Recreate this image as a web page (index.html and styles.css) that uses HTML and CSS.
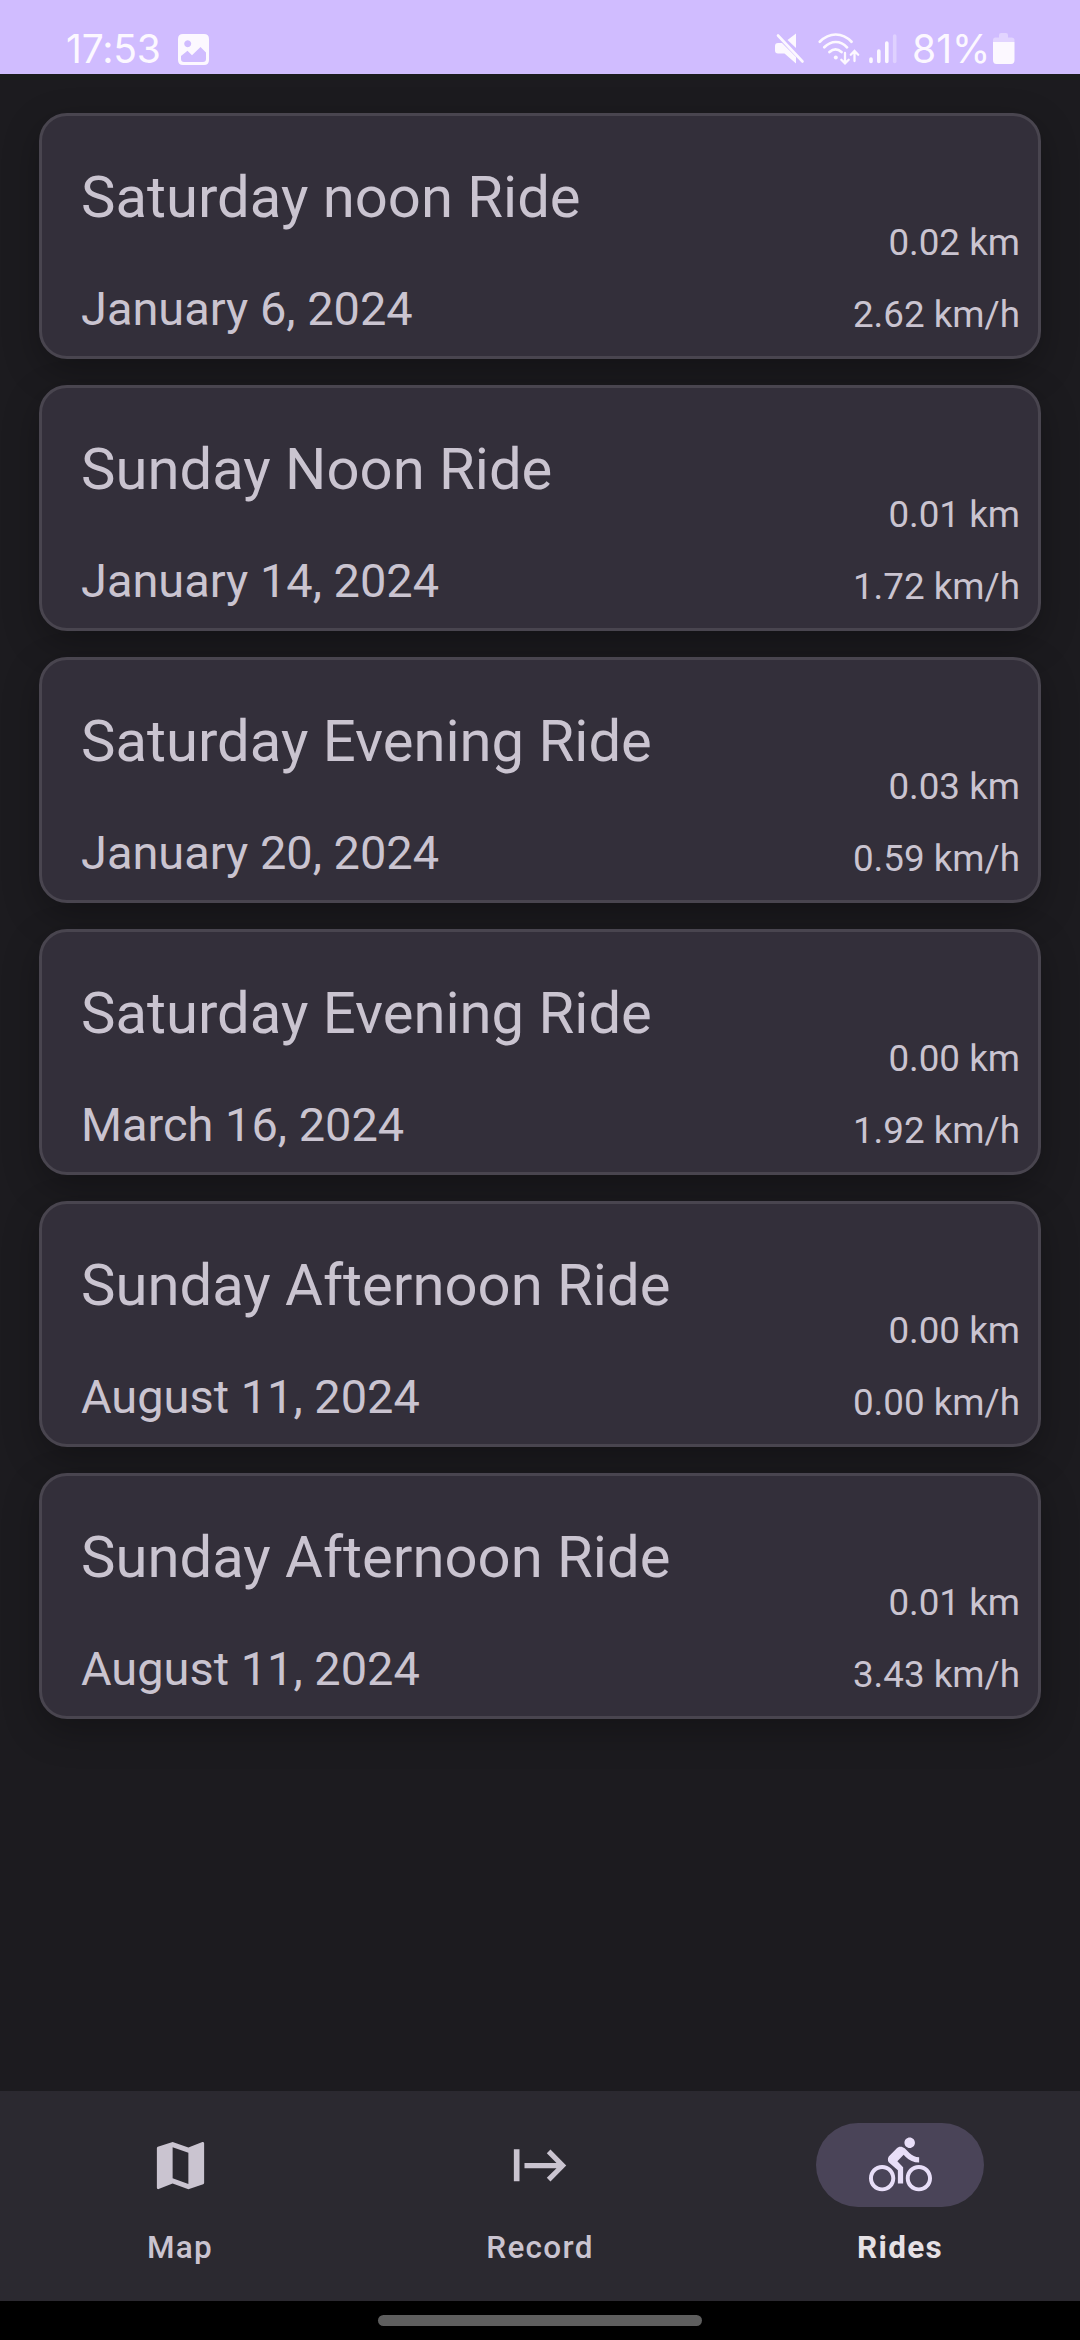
FILE: index.html
```html
<!DOCTYPE html>
<html lang="en">
<head>
<meta charset="utf-8">
<title>Rides</title>
<link rel="stylesheet" href="styles.css">
</head>
<body>
<div class="screen">
  <header class="status">
    <div class="status-group">
      <span class="clock">17:53</span>
      <svg class="ic-photo" width="31" height="31" viewBox="0 0 31 31"><path fill="currentColor" fill-rule="evenodd" d="M5 0H26Q31 0 31 5V26Q31 31 26 31H5Q0 31 0 26V5Q0 0 5 0ZM9.700 6.300a3.500 3.500 0 1 0 .01 0ZM3 22V25Q3 28 6 28H25Q28 28 28 25V18.500L22.500 13L14 21.200L9.500 16.800Z"/></svg>
    </div>
    <div class="status-group">
      <svg class="ic-mute" width="30" height="31" viewBox="0 0 30 31"><path fill="currentColor" d="M3 10H7L21 24V30.500L9.500 20.500H3Q0 20.500 0 17.500V13Q0 10 3 10ZM21 .5V15L12.500 7Z"/><path d="M3 2.500L27.500 28.500" stroke="currentColor" stroke-width="2.600" stroke-linecap="round"/></svg>
      <svg class="ic-wifi" width="42" height="32" viewBox="0 0 42 32" fill="none" stroke="currentColor" stroke-width="2.700" stroke-linecap="round"><path d="M1.800 8.800Q9 1.500 17.800 1.500T33.500 8.800M6.300 14.300Q11.500 9 17.800 9T29 14.300M11.500 19Q17.500 13.800 23.500 19"/><circle cx="17.800" cy="24.500" r="2" fill="currentColor" stroke="none"/><path stroke-width="2.300" d="M27 20V30M23.300 26.700L27 30.300L30.700 26.700M36.500 28V18.500M32.800 21.700L36.500 18L40.200 21.700"/></svg>
      <svg class="ic-signal" width="28" height="31" viewBox="0 0 28 31" stroke="currentColor" stroke-width="3.600" stroke-linecap="round"><path d="M2 26V28.500M9.800 18V28.500M17.800 10V28.500"/><path opacity=".35" d="M25.700 3V28.500"/></svg>
      <span class="percent">81%</span>
      <svg class="ic-battery" width="22" height="31" viewBox="0 0 22 31"><path opacity=".4" fill="currentColor" d="M0 9V7Q0 4.500 2.500 4.500H6V2Q6 0 8 0H13Q15 0 15 2V4.500H18.500Q21.500 4.500 21.500 7V9Z"/><path fill="currentColor" d="M0 9H21.500V27Q21.500 31 18 31H3.500Q0 31 0 27Z"/></svg>
    </div>
  </header>
  <main class="rides">
    <article class="card"><div class="info"><h2>Saturday noon Ride</h2><p>January 6, 2024</p></div><div class="stats"><span>0.02 km</span><span>2.62 km/h</span></div></article>
    <article class="card"><div class="info"><h2>Sunday Noon Ride</h2><p>January 14, 2024</p></div><div class="stats"><span>0.01 km</span><span>1.72 km/h</span></div></article>
    <article class="card"><div class="info"><h2>Saturday Evening Ride</h2><p>January 20, 2024</p></div><div class="stats"><span>0.03 km</span><span>0.59 km/h</span></div></article>
    <article class="card"><div class="info"><h2>Saturday Evening Ride</h2><p>March 16, 2024</p></div><div class="stats"><span>0.00 km</span><span>1.92 km/h</span></div></article>
    <article class="card"><div class="info"><h2>Sunday Afternoon Ride</h2><p>August 11, 2024</p></div><div class="stats"><span>0.00 km</span><span>0.00 km/h</span></div></article>
    <article class="card"><div class="info"><h2>Sunday Afternoon Ride</h2><p>August 11, 2024</p></div><div class="stats"><span>0.01 km</span><span>3.43 km/h</span></div></article>
  </main>
  <nav class="tabs">
    <a class="tab"><span class="pill"><svg width="63" height="63" viewBox="0 0 24 24"><path fill="currentColor" d="M20.500 3l-.16.030L15 5.100 9 3 3.360 4.900c-.21.070-.36.250-.36.480V20.500c0 .28.220.5.500.5l.16-.03L9 18.900l6 2.100 5.640-1.900c.21-.07.360-.25.360-.48V3.500c0-.28-.22-.5-.5-.5zM15 19l-6-2.110V5l6 2.110V19z"/></svg></span><span class="label">Map</span></a>
    <a class="tab"><span class="pill"><svg width="63" height="63" viewBox="0 0 24 24"><path fill="currentColor" d="M15.800 5.900L21.800 12L15.800 18.100L14.400 16.700L18.100 13H5.900V11H18.100L14.400 7.300ZM1.850 5.800H4V18H1.850Z"/></svg></span><span class="label">Record</span></a>
    <a class="tab active"><span class="pill"><svg width="63" height="63" viewBox="0 0 24 24"><path transform="translate(0 -.15)" fill="currentColor" d="M15.500 5.500c1.100 0 2-.9 2-2s-.9-2-2-2-2 .9-2 2 .9 2 2 2zM5 12c-2.800 0-5 2.200-5 5s2.200 5 5 5 5-2.200 5-5-2.200-5-5-5zm0 8.500c-1.900 0-3.500-1.600-3.500-3.500s1.600-3.500 3.500-3.500 3.500 1.600 3.500 3.500-1.600 3.500-3.500 3.500zm5.800-10l2.400-2.400.8.800c1.300 1.300 3 2.100 5.100 2.100V9c-1.500 0-2.700-.6-3.600-1.500l-1.900-1.900c-.5-.4-1-.6-1.600-.6s-1.100.2-1.400.6L7.800 8.400c-.4.4-.6.900-.6 1.400 0 .6.200 1.100.6 1.400L11 14v5h2v-6.200l-2.200-2.300zM19 12c-2.800 0-5 2.200-5 5s2.200 5 5 5 5-2.200 5-5-2.200-5-5-5zm0 8.500c-1.900 0-3.500-1.600-3.500-3.500s1.600-3.500 3.500-3.500 3.500 1.600 3.500 3.500-1.600 3.500-3.500 3.500z"/></svg></span><span class="label">Rides</span></a>
  </nav>
  <footer class="gesture"><span class="handle"></span></footer>
</div>
</body>
</html>
```

FILE: styles.css
```css
* { box-sizing: border-box; margin: 0; padding: 0; }
body { background: #000; font-family: Roboto, sans-serif; }
.screen { width: 1080px; height: 2340px; display: flex; flex-direction: column; background: #1c1b1f; }
svg { display: block; flex: none; }

.status { height: 74px; flex: none; display: flex; justify-content: space-between; align-items: flex-start; padding: 33px 65px 0 66px; background: #d0bcff; color: #fcf8ff; font-family: Inter, sans-serif; }
.status-group { display: flex; align-items: flex-start; }
.clock, .percent { font-size: 39px; line-height: 31px; white-space: nowrap; }
.clock { width: 112px; letter-spacing: -0.2px; }
.ic-photo { margin-top: 1px; }
.ic-wifi { margin-left: 13px; }
.ic-signal { margin-left: 9px; }
.percent { width: 81px; margin-left: 15px; letter-spacing: 0; }

.rides { flex: 1; display: flex; flex-direction: column; gap: 26px; padding: 39px 39px 0; }
.card { height: 246px; display: flex; justify-content: space-between; padding: 0 18px 0 39px; border: 3px solid #49454f; border-radius: 28px; background: #332f3a; color: #cac4d0; box-shadow: 0 12px 36px rgba(0, 0, 0, .28); }
.info { padding-top: 46px; }
.info h2 { font-size: 58px; font-weight: 400; line-height: 70px; }
.info p { margin-top: 49px; font-size: 46.95px; line-height: 56px; }
.stats { display: flex; flex-direction: column; align-items: flex-end; gap: 28px; padding-top: 105px; font-size: 36.75px; line-height: 44px; }

.tabs { height: 210px; flex: none; display: grid; grid-template-columns: repeat(3, 1fr); background: #2b2930; color: #cac4d0; }
.tab { display: flex; flex-direction: column; align-items: center; gap: 20px; padding-top: 32px; }
.pill { width: 168px; height: 84px; display: grid; place-items: center; border-radius: 42px; }
.label { font-size: 31.5px; font-weight: 500; line-height: 42px; letter-spacing: 1.3px; }
.active .pill { background: #4a4458; color: #e8def8; }
.active .label { color: #e6e1e5; font-weight: 700; }

.gesture { height: 39px; flex: none; display: flex; justify-content: center; align-items: center; background: #000; }
.handle { width: 324px; height: 11px; border-radius: 6px; background: #5e5e5e; }
```
